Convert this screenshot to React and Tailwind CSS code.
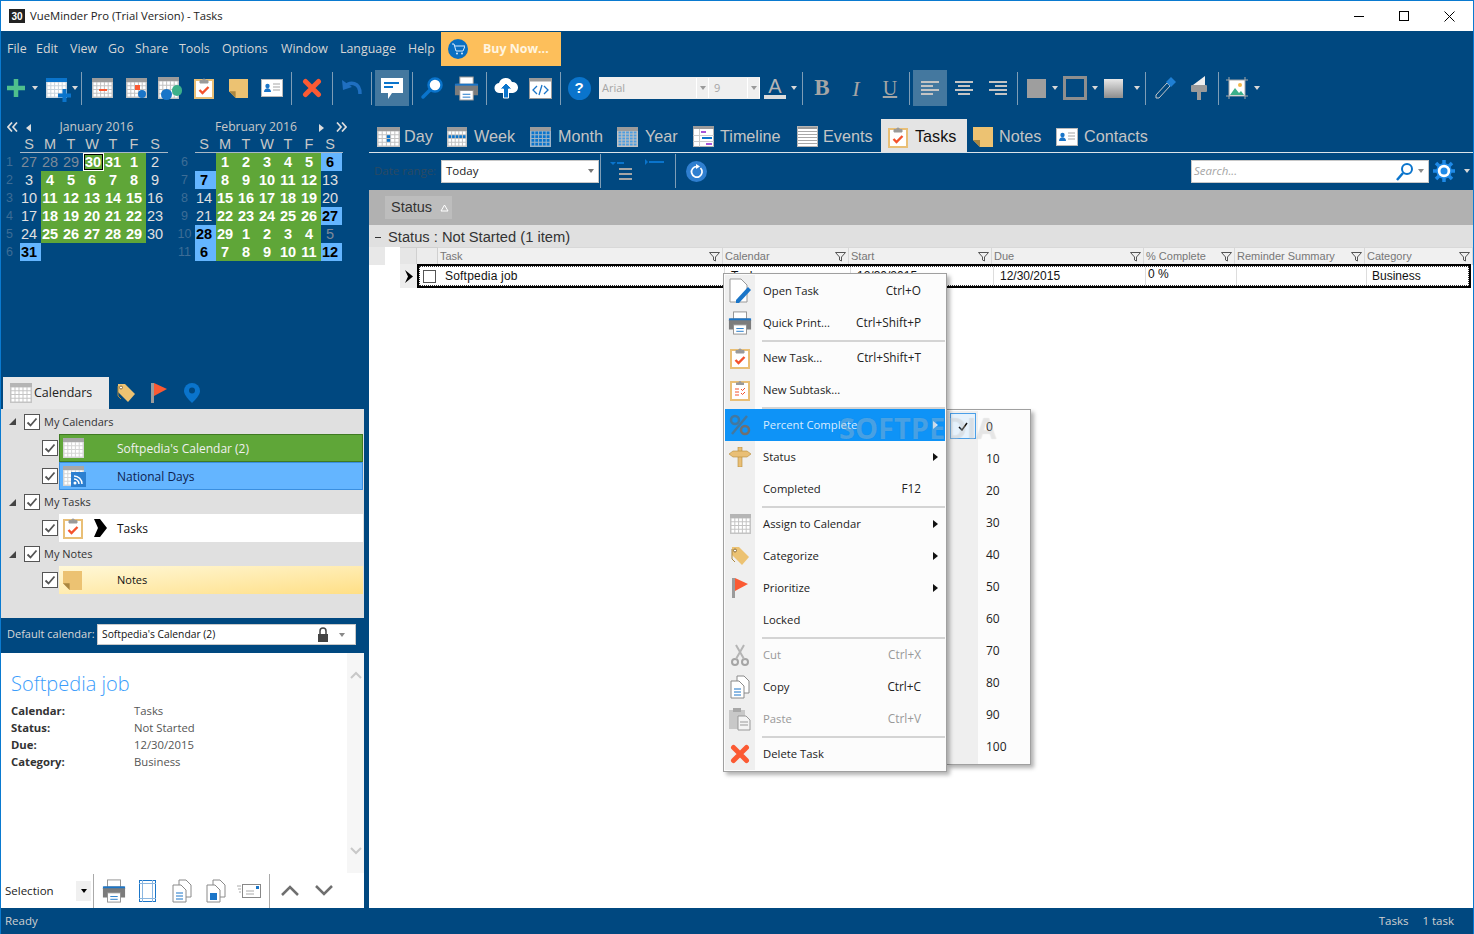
import React from "react";

const Grid = ({ w = 22, h = 20, cols = 5, rows = 4, head = "#9b9b9b", blue = () => false, frame = "#c2c2c2", cellBlue = "#0a74cc" }) => {
  const cw = (w - 2) / cols, ch = (h - 5) / rows, cells = [];
  for (let r = 0; r < rows; r++) for (let c = 0; c < cols; c++)
    cells.push(<rect key={r + "-" + c} x={1.5 + c * cw} y={4.5 + r * ch} width={cw - 1} height={ch - 1} fill={blue(r, c) ? cellBlue : "#fff"} />);
  return (
    <svg width={w} height={h} viewBox={`0 0 ${w} ${h}`} className="shrink-0">
      <rect width={w} height={h} fill={frame} />
      <rect width={w} height="4" fill={head} />
      {cells}
    </svg>
  );
};

const Clip = ({ s = 22 }) => (
  <svg width={s} height={s * 1.1} viewBox="0 0 20 22" className="shrink-0">
    <rect x="1" y="3" width="18" height="18" fill="#fff" stroke="#e9bf76" strokeWidth="2" />
    <path d="M6 6V3.500h2.500a1.500 1.500 0 0 1 3 0H14V6z" fill="#9a9a9a" stroke="#9a9a9a" />
    <path d="M5.500 13l3 3 6-6" fill="none" stroke="#f4522d" strokeWidth="2.400" />
  </svg>
);
const Note = ({ s = 20 }) => (
  <svg width={s} height={s} viewBox="0 0 20 20" className="shrink-0">
    <path d="M0 0h20v20H7L0 13z" fill="#ecc272" />
    <path d="M0 13h7v7z" fill="#a98640" />
  </svg>
);
const Contact = ({ w = 22, h = 18 }) => (
  <svg width={w} height={h} viewBox="0 0 22 18" className="shrink-0">
    <rect x=".5" y=".5" width="21" height="17" fill="#fff" stroke="#b9b9b9" />
    <circle cx="6.500" cy="7" r="2.200" fill="#1a75c8" />
    <path d="M3 13c0-5 7-5 7 0z" fill="#1a75c8" />
    <path d="M12 5h7M12 8h7M12 11h7" stroke="#a5a5a5" />
  </svg>
);
const RedX = ({ s = 20 }) => (
  <svg width={s} height={s} viewBox="0 0 20 20" className="shrink-0">
    <path d="M3.500 3.500l13 13M16.500 3.500l-13 13" stroke="#fb5a33" strokeWidth="5" strokeLinecap="round" />
  </svg>
);
const Printer = ({ s = 26 }) => (
  <svg width={s} height={s} viewBox="0 0 26 26" className="shrink-0">
    <rect x="6" y="1" width="14" height="8" fill="#fff" stroke="#8e8e8e" />
    <path d="M1 10a2 2 0 0 1 2-2h20a2 2 0 0 1 2 2v10H1z" fill="#7c7c7c" />
    <rect x="1" y="8" width="24" height="2" fill="#1a75c8" />
    <rect x="6" y="15" width="14" height="10" fill="#fff" stroke="#8e8e8e" />
    <path d="M9 19h8M9 22h8" stroke="#1a75c8" />
  </svg>
);
const Magnifier = () => (
  <svg width="24" height="24" viewBox="0 0 24 24" className="shrink-0">
    <circle cx="15" cy="9" r="6.500" fill="#fff" stroke="#0a74cc" strokeWidth="2.500" />
    <path d="M10 14L3 21" stroke="#0a74cc" strokeWidth="3.500" strokeLinecap="round" />
  </svg>
);
const Arrow = ({ c = "#d8d8d8" }) => (
  <svg width="6" height="4" viewBox="0 0 6 4" className="shrink-0"><path d="M0 0h6L3 4z" fill={c} /></svg>
);
const Funnel = () => (
  <svg width="11" height="10" viewBox="0 0 11 10" className="shrink-0">
    <path d="M.5.500h10L6.500 5v4l-2-1V5z" fill="none" stroke="#555" />
  </svg>
);
const Check = () => (
  <svg width="16" height="16" viewBox="0 0 16 16" className="shrink-0">
    <rect x=".5" y=".5" width="15" height="15" fill="#fff" stroke="#555" />
    <path d="M3.500 8.500l3 3 6-7" fill="none" stroke="#555" strokeWidth="1.800" />
  </svg>
);
const Tri = () => (
  <svg width="7" height="7" viewBox="0 0 7 7" className="shrink-0"><path d="M7 0v7H0z" fill="#444" /></svg>
);
const Tag = ({ s = 20 }) => (
  <svg width={s} height={s} viewBox="0 0 20 20" className="shrink-0">
    <path d="M2 1h7l10 10-7 8L2 9z" fill="#ecc272" />
    <circle cx="5" cy="4.500" r="1.500" fill="#fff" stroke="#8a6d3b" />
    <path d="M2 3v10l3 3" fill="none" stroke="#a98640" />
  </svg>
);
const Flag = ({ s = 20 }) => (
  <svg width={s} height={s} viewBox="0 0 20 20" className="shrink-0">
    <rect x="2" y="0" width="3" height="20" fill="#9b9b9b" />
    <path d="M5 0l13 6-13 7z" fill="#fb5a33" />
  </svg>
);
const Pin = () => (
  <svg width="16" height="20" viewBox="0 0 16 20" className="shrink-0">
    <path d="M8 0a8 8 0 0 1 8 8c0 4-5 9-8 12C5 17 0 12 0 8a8 8 0 0 1 8-8z" fill="#0a74cc" />
    <circle cx="8" cy="7.500" r="3" fill="#004880" />
  </svg>
);
const DocIcon = ({ letter }) => (
  <svg width="22" height="24" viewBox="0 0 22 24" className="shrink-0">
    <path d="M8 1h7l5 5v12H8z" fill="#fff" stroke="#8a8a8a" />
    <path d="M2 6h8l5 5v12H2z" fill="#fff" stroke="#8a8a8a" />
    {letter ? <rect x="5" y="14" width="7" height="7" fill="#1a75c8" /> : <path d="M5 14h7M5 17h7M5 20h7" stroke="#1a75c8" />}
  </svg>
);
const Slot = ({ w = "w-[34px]", children, className = "" }) => (
  <div className={`${w} h-[34px] flex items-center justify-center shrink-0 ${className}`}>{children}</div>
);
const Sep = ({ c = "" }) => <div className={`w-px h-[33px] bg-[#7e9db6] shrink-0 ${c}`} />;

const MENUBAR = [["File", "w-[29px]"], ["Edit", "w-[34px]"], ["View", "w-[38px]"], ["Go", "w-[27px]"], ["Share", "w-[44px]"], ["Tools", "w-[43px]"], ["Options", "w-[59px]"], ["Window", "w-[59px]"], ["Language", "w-[68px]"], ["Help", "w-[33px]"]];

const Toolbar = () => (
  <div className="h-[44px] flex items-center shrink-0 text-[#c4c4c4]">
    <Slot w="w-[29px]" className="pl-[1px]">
      <svg width="20" height="20" viewBox="0 0 20 20"><path d="M10 1v18M1 10h18" stroke="#4fc08d" strokeWidth="4.500" /></svg>
    </Slot>
    <Slot w="w-[10px]"><Arrow /></Slot>
    <Slot w="w-[32px]">
      <div className="relative">
        <Grid w={21} h={20} head="#0a74cc" frame="#c8d4de" />
        <svg width="13" height="13" viewBox="0 0 13 13" className="absolute -right-[4px] -bottom-[4px]"><path d="M6.500 0v13M0 6.500h13" stroke="#0a74cc" strokeWidth="4" /></svg>
      </div>
    </Slot>
    <Slot w="w-[6px]"><Arrow /></Slot>
    <Sep c="ml-[3px] mr-[3px]" />
    <Slot>
      <div className="relative">
        <Grid w={21} h={20} />
        <div className="absolute left-[7px] top-[11px] w-[8px] h-[2px] bg-[#fb5a33]" />
      </div>
    </Slot>
    <Slot>
      <div className="relative">
        <Grid w={21} h={20} />
        <div className="absolute left-[9px] top-[7px] w-[5px] h-[5px] bg-[#fb5a33]" />
        <div className="absolute left-[12px] top-[12px] w-[8px] h-[8px] rounded-full bg-[#1a75c8]" />
      </div>
    </Slot>
    <Slot>
      <div className="relative -ml-[4px]">
        <Grid w={21} h={22} />
        <div className="absolute left-[3px] top-[12px] w-[11px] h-[11px] rounded-full bg-[#1a75c8]" />
        <div className="absolute left-[14px] top-[8px] w-[10px] h-[11px] rounded-full bg-[#3cb08a]" />
      </div>
    </Slot>
    <Slot><Clip s={20} /></Slot>
    <Slot><Note s={19} /></Slot>
    <Slot><Contact /></Slot>
    <Sep c="ml-[2px] mr-[3px]" />
    <Slot><RedX /></Slot>
    <Sep c="ml-[3px] mr-[2px]" />
    <Slot>
      <svg width="22" height="20" viewBox="0 0 22 20"><path d="M4 9c5-6 15-5 15 7" fill="none" stroke="#1f6fc0" strokeWidth="3.500" /><path d="M1 2l1 10 9-3z" fill="#1f6fc0" /></svg>
    </Slot>
    <Sep c="ml-[2px] mr-[3px]" />
    <Slot className="bg-[#44789f] !h-[36px]">
      <svg width="24" height="24" viewBox="0 0 24 24"><path d="M1 2h22v15H12l-4 6v-6H1z" fill="#fff" /><path d="M4 6h15v2H4zM4 10h9v2H4z" fill="#0a74cc" /></svg>
    </Slot>
    <Sep c="ml-[3px] mr-[2px]" />
    <Slot><Magnifier /></Slot>
    <Slot><Printer s={25} /></Slot>
    <Sep c="ml-[3px] mr-[2px]" />
    <Slot>
      <svg width="24" height="22" viewBox="0 0 24 22"><path d="M6 16a5 5 0 0 1-1-10 7 7 0 0 1 13-1 5.500 5.500 0 0 1 1 11z" fill="#fff" /><path d="M12 6l6 6h-3.500v9h-5v-9H6z" fill="#0a74cc" stroke="#fff" /></svg>
    </Slot>
    <Slot>
      <svg width="23" height="21" viewBox="0 0 23 21"><rect x=".5" y=".5" width="22" height="20" fill="#fff" stroke="#9a9a9a" /><rect x=".5" y=".5" width="22" height="3" fill="#9a9a9a" /><path d="M8 8l-4 4 4 4M15 8l4 4-4 4M13 7l-3 10" fill="none" stroke="#1a75c8" strokeWidth="1.300" /></svg>
    </Slot>
    <Sep c="ml-[3px] mr-[1px]" />
    <Slot>
      <div className="w-[23px] h-[23px] rounded-full bg-[#0a74cc] text-white text-[15px] font-bold flex items-center justify-center font-['Liberation_Sans',sans-serif]">?</div>
    </Slot>
    <div className="ml-[3px] w-[161px] h-[22px] bg-[#efefef] flex items-center text-[11px] text-[#a5a5a5] shrink-0">
      <span className="pl-[3px] w-[97px]">Arial</span>
      <span className="w-[13px] h-[20px] border-x border-white flex items-center justify-center"><Arrow c="#9a9a9a" /></span>
      <span className="pl-[5px] w-[38px]">9</span>
      <span className="w-[13px] h-[20px] border-x border-white flex items-center justify-center"><Arrow c="#9a9a9a" /></span>
    </div>
    <Slot w="w-[30px]">
      <div className="flex flex-col items-center font-['Liberation_Sans',sans-serif] text-[20px] leading-[18px] text-[#b5b5b5]">A<div className="w-[22px] h-[4px] bg-[#dcdcdc]" /></div>
    </Slot>
    <Slot w="w-[8px]"><Arrow /></Slot>
    <Sep c="ml-[4px] mr-[2px]" />
    <Slot><span className="font-['Liberation_Serif',serif] font-bold text-[23px] text-[#a5a5a5]">B</span></Slot>
    <Slot><span className="font-['Liberation_Serif',serif] italic text-[22px] text-[#a5a5a5]">I</span></Slot>
    <Slot><span className="font-['Liberation_Serif',serif] underline text-[20px] text-[#a5a5a5]">U</span></Slot>
    <Sep c="ml-[2px] mr-[3px]" />
    <Slot className="bg-[#44789f] !h-[36px]"><Align a="l" /></Slot>
    <Slot><Align a="c" /></Slot>
    <Slot><Align a="r" /></Slot>
    <Sep c="ml-[2px] mr-[2px]" />
    <Slot w="w-[32px]"><div className="w-[19px] h-[19px] bg-[#9e9e9e]" /></Slot>
    <Slot w="w-[6px]"><Arrow /></Slot>
    <Slot><div className="w-[24px] h-[24px] border-[3px] border-[#8e8e8e]" /></Slot>
    <Slot w="w-[6px]"><Arrow /></Slot>
    <Slot w="w-[30px]"><div className="w-[19px] h-[19px] bg-gradient-to-b from-[#e8e8e8] to-[#8e8e8e]" /></Slot>
    <Slot w="w-[17px]"><Arrow /></Slot>
    <Sep c="mr-[2px]" />
    <Slot>
      <svg width="24" height="24" viewBox="0 0 24 24"><path d="M14 7L3 19v3h3L17 10z" fill="none" stroke="#c8c8c8" /><path d="M13 6l5-5 5 5-5 5z" fill="#1f7fd4" /></svg>
    </Slot>
    <Slot>
      <svg width="20" height="26" viewBox="0 0 20 26"><path d="M4 10l12-9v9z" fill="#eee" /><rect x="2" y="10" width="16" height="7" rx="1" fill="#9a9a9a" /><rect x="8" y="17" width="4" height="8" fill="#9a9a9a" /></svg>
    </Slot>
    <Sep c="ml-[2px] mr-[1px]" />
    <Slot>
      <svg width="22" height="22" viewBox="0 0 22 22"><rect x="3" y="3" width="16" height="16" fill="#fff" /><path d="M0 3h22M0 19h22M3 0v22M19 0v22" stroke="#a8a8a8" /><circle cx="14" cy="8" r="2" fill="#f2b84b" /><path d="M4 18l5-7 4 5 2-2 3 4z" fill="#3cb08a" /></svg>
    </Slot>
    <Slot w="w-[6px]"><Arrow /></Slot>
  </div>
);
const Align = ({ a }) => {
  const x = a === "l" ? 0 : a === "c" ? 3 : 6;
  return (
    <svg width="18" height="15" viewBox="0 0 18 15">
      <rect y="0" width="18" height="2" fill="#c4c4c4" />
      <rect x={x} y="4" width="12" height="2" fill="#c4c4c4" />
      <rect y="8" width="18" height="2" fill="#c4c4c4" />
      <rect x={x} y="12" width="12" height="2" fill="#c4c4c4" />
    </svg>
  );
};

const JAN = [
  [1, ["27d", "28d", "29d", "30s", "31g", "1g", "2"]],
  [2, ["3", "4g", "5g", "6g", "7g", "8g", "9"]],
  [3, ["10", "11g", "12g", "13g", "14g", "15g", "16"]],
  [4, ["17", "18g", "19g", "20g", "21g", "22g", "23"]],
  [5, ["24", "25g", "26g", "27g", "28g", "29g", "30"]],
  [6, ["31b", "", "", "", "", "", ""]],
];
const FEB = [
  [6, ["", "1g", "2g", "3g", "4g", "5g", "6b"]],
  [7, ["7b", "8g", "9g", "10g", "11g", "12g", "13"]],
  [8, ["14", "15g", "16g", "17g", "18g", "19g", "20"]],
  [9, ["21", "22g", "23g", "24g", "25g", "26g", "27b"]],
  [10, ["28b", "29g", "1g", "2g", "3g", "4g", "5d"]],
  [11, ["6b", "7g", "8g", "9g", "10g", "11g", "12b"]],
];
const Cell = ({ v }) => {
  const kind = v.slice(-1);
  const n = v.replace(/[a-z]/g, "");
  const base = "w-[21px] h-[18px] flex items-center justify-center pr-[3px] text-[14.500px] leading-none whitespace-nowrap ";
  if (kind === "g") return <div className={base + "bg-[#5fa638] text-white font-bold"}>{n}</div>;
  if (kind === "b") return <div className={base + "bg-[#64b5ff] text-black font-bold"}>{n}</div>;
  if (kind === "d") return <div className={base + "text-[#7d8a99]"}>{n}</div>;
  if (kind === "s") return (
    <div className="w-[21px] h-[18px] bg-white p-[1px]">
      <div className="w-full h-full border border-black bg-[#5fa638] flex items-center justify-center pr-[1px] text-white font-bold text-[14.500px] leading-none">{n}</div>
    </div>
  );
  return <div className={base + "text-[#e0e0e0]"}>{n}</div>;
};
const Double = ({ flip }) => (
  <svg width="11" height="10" viewBox="0 0 11 10" className={flip ? "rotate-180" : ""}>
    <path d="M5 0.500L1 5l4 4.500M10 0.500L6 5l4 4.500" fill="none" stroke="#ddd" strokeWidth="1.700" />
  </svg>
);
const Month = ({ rows, title, left }) => (
  <div className="w-[167px] shrink-0 font-['Liberation_Sans',sans-serif]">
    <div className={`h-[17px] ml-[19px] flex items-center justify-center text-[12.200px] text-[#c8c8c8] relative font-['Open_Sans',sans-serif] ${left ? "pl-[5px]" : "pr-[26px]"}`}>
      {left ? (
        <>
          <span className="absolute -left-[13px] top-[3px]"><Double /></span>
          <svg width="5" height="8" viewBox="0 0 5 8" className="absolute left-[6px] top-[5px]"><path d="M5 0v8L0 4z" fill="#ddd" /></svg>
        </>
      ) : (
        <>
          <svg width="5" height="8" viewBox="0 0 5 8" className="absolute right-[19px] top-[5px]"><path d="M0 0v8l5-4z" fill="#ddd" /></svg>
          <span className="absolute -right-[4px] top-[3px]"><Double flip /></span>
        </>
      )}
      {title}
    </div>
    <div className="ml-[19px] h-[16px] flex border-b border-[#a8b8c6] box-content">
      {["S", "M", "T", "W", "T", "F", "S"].map((d, i) => (
        <div key={i} className="w-[21px] pr-[3px] text-center text-[14.500px] leading-[17px] text-[#c8c8c8]">{d}</div>
      ))}
    </div>
    {rows.map(([wk, days]) => (
      <div key={wk} className="flex h-[18px]">
        <div className="w-[19px] pr-[2px] text-center text-[12.500px] leading-[18px] text-[#3d6d96]">{wk}</div>
        {days.map((d, i) => <Cell key={i} v={d} />)}
      </div>
    ))}
  </div>
);

const TreeHead = ({ label, c = "h-[24px]" }) => (
  <div className={`${c} flex items-center pl-[8px] shrink-0`}>
    <Tri /><span className="w-[8px]" /><Check /><span className="ml-[4px] pt-[1px] text-[#333] text-[11px]">{label}</span>
  </div>
);
const TreeRow = ({ cls, icon, label, extra, text = "text-[#111]" }) => (
  <div className="flex items-center h-[28px] pl-[41px] shrink-0">
    <Check />
    <div className={`ml-[1px] w-[304px] h-[28px] flex items-center relative ${cls}`}>
      <div className="w-[58px] pl-[4px] flex items-center">{icon}</div>
      {extra}
      <span className={`pt-[1px] ${text}`}>{label}</span>
    </div>
  </div>
);

const Cal = () => <Grid w={21} h={20} frame="#d5d5d5" head="#a8a8a8" />;

const Left = () => (
  <div className="w-[363px] shrink-0 flex flex-col">
    <div className="h-[267px] shrink-0 flex pt-[9px] gap-[8px]">
      <Month rows={JAN} title="January 2016" left />
      <Month rows={FEB} title="February 2016" />
    </div>
    <div className="h-[32px] flex shrink-0 pl-[2px]">
      <div className="w-[106px] bg-[#e8e8e8] flex items-center pl-[7px] gap-[2px] text-[12.500px] text-[#222]">
        <Grid w={22} h={20} frame="#c4c4c4" head="#b5b5b5" /><span>Calendars</span>
      </div>
      <div className="w-[33px] flex items-center justify-center"><Tag /></div>
      <div className="w-[33px] flex items-center justify-center"><Flag /></div>
      <div className="w-[33px] flex items-center justify-center"><Pin /></div>
    </div>
    <div className="h-[209px] bg-[#e0e0e0] shrink-0 flex flex-col text-[12px]">
      <TreeHead label="My Calendars" c="h-[25px]" />
      <TreeRow cls="bg-[#5fa638] shadow-[inset_0_0_0_1px_#3f7a22]" icon={<Cal />} label="Softpedia's Calendar (2)" text="text-[#f0f0f0]" />
      <TreeRow cls="bg-[#64b5ff] shadow-[inset_0_0_0_1px_#3a8fe0]" icon={
        <div className="relative"><Cal />
          <svg width="15" height="15" viewBox="0 0 15 15" className="absolute left-[8px] top-[6px]"><rect width="15" height="15" fill="#2c7fd0" /><circle cx="4" cy="11" r="1.500" fill="#fff" /><path d="M3 7a5 5 0 0 1 5 5M3 4a8 8 0 0 1 8 8" fill="none" stroke="#fff" strokeWidth="1.500" /></svg>
        </div>
      } label="National Days" text="text-[#0d2250]" />
      <TreeHead label="My Tasks" />
      <TreeRow cls="bg-white" icon={<Clip s={20} />} extra={
        <svg width="13" height="18" viewBox="0 0 13 18" className="absolute left-[35px] top-[5px]"><path d="M0 0l6 0 7 9-7 9H0l4-9z" fill="#000" /></svg>
      } label="Tasks" />
      <TreeHead label="My Notes" />
      <TreeRow cls="bg-gradient-to-br from-[#fff8d8] to-[#ffdf85]" icon={<Note s={19} />} label="Notes" text="text-[#111] text-[11px]" />
    </div>
    <div className="h-[35px] pb-[2px] shrink-0 flex items-center pl-[6px] text-[11px] text-[#d8d8d8]">
      <span className="w-[90px] whitespace-nowrap">Default calendar:</span>
      <div className="w-[259px] h-[21px] bg-white border border-[#c8c8c8] flex items-center pl-[4px] text-[#111] text-[10.300px]">
        <span className="flex-1">Softpedia's Calendar (2)</span>
        <svg width="12" height="15" viewBox="0 0 12 15"><path d="M3 7V4a3 3 0 0 1 6 0v3" fill="none" stroke="#444" strokeWidth="1.500" /><rect x="1" y="7" width="10" height="8" fill="#444" /></svg>
        <span className="w-[26px] flex justify-center"><Arrow c="#888" /></span>
      </div>
    </div>
    <div className="h-[220px] bg-white shrink-0 flex">
      <div className="flex-1 pl-[10px] pt-[17px]">
        <div className="text-[20px] leading-[28px] text-[#3b9dfb] font-light">Softpedia job</div>
        <div className="mt-[4px] text-[11.300px] leading-[17px] text-[#555] grid grid-cols-[123px_1fr]">
          <b className="text-[#333]">Calendar:</b><span>Tasks</span>
          <b className="text-[#333]">Status:</b><span>Not Started</span>
          <b className="text-[#333]">Due:</b><span>12/30/2015</span>
          <b className="text-[#333]">Category:</b><span>Business</span>
        </div>
      </div>
      <div className="w-[17px] bg-[#f6f6f6] flex flex-col justify-between items-center py-[18px]">
        <svg width="12" height="8" viewBox="0 0 12 8"><path d="M1 7l5-5 5 5" fill="none" stroke="#c8c8c8" strokeWidth="2" /></svg>
        <svg width="12" height="8" viewBox="0 0 12 8"><path d="M1 1l5 5 5-5" fill="none" stroke="#c8c8c8" strokeWidth="2" /></svg>
      </div>
    </div>
    <div className="h-[35px] bg-white shrink-0 flex items-center text-[11.500px] text-[#222]">
      <span className="w-[75px] pl-[4px]">Selection</span>
      <div className="w-[15px] h-[20px] bg-[#f0f0f0] flex items-center justify-center"><Arrow c="#000" /></div>
      <div className="ml-[2px] w-px h-[34px] bg-[#aaa]" />
      <div className="w-[40px] flex justify-center"><Printer s={24} /></div>
      <div className="w-[27px] flex justify-center">
        <svg width="17" height="22" viewBox="0 0 17 22"><rect x=".5" y=".5" width="16" height="21" fill="none" stroke="#1a75c8" /><path d="M3.500 0v22M13.500 0v22M0 3.500h17M0 18.500h17" stroke="#8ab6e0" /></svg>
      </div>
      <div className="w-[41px] flex justify-center"><DocIcon /></div>
      <div className="w-[27px] flex justify-center"><DocIcon letter /></div>
      <div className="w-[40px] flex justify-center">
        <svg width="24" height="14" viewBox="0 0 24 14"><rect x="5.500" y=".5" width="18" height="13" fill="#fff" stroke="#888" /><rect x="19" y="2" width="3" height="3" fill="#1a75c8" /><path d="M9 7h8M9 10h8M0 2h4M1 5h3M2 8h2" stroke="#aaa" /></svg>
      </div>
      <div className="w-px h-[34px] bg-[#aaa]" />
      <div className="w-[40px] flex justify-center"><svg width="18" height="11" viewBox="0 0 18 11"><path d="M1 10l8-8 8 8" fill="none" stroke="#6f6f6f" strokeWidth="2.500" /></svg></div>
      <div className="w-[27px] flex justify-center"><svg width="18" height="11" viewBox="0 0 18 11"><path d="M1 1l8 8 8-8" fill="none" stroke="#6f6f6f" strokeWidth="2.500" /></svg></div>
    </div>
  </div>
);

const Timeline = () => (
  <svg width="21" height="21" viewBox="0 0 21 21" className="shrink-0">
    <rect x=".5" y=".5" width="20" height="20" fill="#fff" stroke="#b5b5b5" />
    <rect width="21" height="3" fill="#9b9b9b" />
    <path d="M6.500 3v18M0 9.500h21M0 15.500h21" stroke="#ccc" />
    <rect x="8" y="5" width="5" height="2" fill="#a855d8" />
    <rect x="9" y="11" width="10" height="2" fill="#0a74cc" />
    <rect x="13" y="17" width="6" height="2" fill="#a855d8" />
  </svg>
);
const Events = () => (
  <svg width="21" height="21" viewBox="0 0 21 21" className="shrink-0">
    <rect width="21" height="21" fill="#fff" />
    <rect width="21" height="3" fill="#9b9b9b" />
    <path d="M0 5.500h21M0 8.500h21M0 11.500h21M0 14.500h21M0 17.500h21" stroke="#a8a8a8" />
    <rect x=".5" y=".5" width="20" height="20" fill="none" stroke="#b5b5b5" />
  </svg>
);
const TABS = [
  ["Day", <Grid w={23} h={20} cols={5} rows={4} blue={(r, c) => (r === 1 || r === 2) && c === 2} />, "w-[70px]", "gap-[4px]"],
  ["Week", <Grid w={20} h={20} cols={5} rows={4} blue={(r) => r === 1} />, "w-[83px]", "gap-[7px]"],
  ["Month", <Grid w={21} h={20} cols={5} rows={4} blue={() => true} frame="#9cb4c8" />, "w-[87px]", "gap-[7px]"],
  ["Year", <Grid w={21} h={20} cols={5} rows={5} blue={() => true} cellBlue="#4d9de0" />, "w-[76px]", "gap-[7px]"],
  ["Timeline", <Timeline />, "w-[104px]", "gap-[6px]"],
  ["Events", <Events />, "w-[84px]", "gap-[5px]"],
];

const Right = () => (
  <div className="flex-1 flex flex-col min-w-0">
    <div className="h-[42px] shrink-0 flex items-end pl-[8px] font-['Liberation_Sans',sans-serif] text-[16.200px] text-[#c4c4c4]">
      {TABS.map(([t, ic, w, g]) => (
        <div key={t} className={`${w} h-[33px] pt-[2px] flex items-center ${g} shrink-0`}>{ic}<span>{t}</span></div>
      ))}
      <div className="w-[86px] h-[33px] pt-[2px] bg-[#e4e4e4] flex items-center pl-[7px] gap-[7px] text-[#111] shrink-0"><Clip s={20} /><span>Tasks</span></div>
      <div className="w-[89px] h-[33px] pt-[2px] flex items-center pl-[6px] gap-[6px] shrink-0"><Note s={20} /><span>Notes</span></div>
      <div className="h-[33px] pt-[2px] flex items-center gap-[6px] shrink-0"><Contact /><span>Contacts</span></div>
    </div>
    <div className="h-px bg-[#dce4ea] shrink-0" />
    <div className="h-[36px] shrink-0 flex items-center text-[11.500px]">
      <span className="w-[72px] pl-[5px] text-[#2b4a63] whitespace-nowrap">Date range:</span>
      <div className="w-[158px] h-[23px] bg-white border border-[#c8c8c8] flex items-center pl-[4px] text-[#222] justify-between pr-[4px]">
        Today<Arrow c="#777" />
      </div>
      <div className="w-px h-[34px] ml-[1px] bg-[#7e9db6]" />
      <svg width="74" height="24" viewBox="0 0 74 24" className="shrink-0">
        <path d="M9 3h6l-3 3z" fill="#0a74cc" /><path d="M16 4h7" stroke="#0a74cc" strokeWidth="2" />
        <path d="M18 10h13M18 15h13M18 20h13" stroke="#a5a5a5" strokeWidth="2" />
        <path d="M44 0v6l3-3z" fill="#0a74cc" /><path d="M48 3h15" stroke="#0a74cc" strokeWidth="2" />
      </svg>
      <div className="w-px h-[34px] bg-[#7e9db6]" />
      <div className="ml-[10px] w-[21px] h-[21px] rounded-full bg-[#2f7fd0] flex items-center justify-center">
        <svg width="15" height="15" viewBox="0 0 15 15"><path d="M11.500 4a5.300 5.300 0 1 1-3.500-1.500" fill="none" stroke="#fff" strokeWidth="1.700" /><path d="M7 0v5l4-2.500z" fill="#fff" /></svg>
      </div>
      <div className="ml-[484px] w-[238px] h-[23px] bg-white border border-[#c8c8c8] flex items-center pl-[2px] text-[#a5a5a5] italic shrink-0">
        <span className="flex-1">Search...</span>
        <svg width="19" height="19" viewBox="0 0 19 19"><circle cx="12" cy="7" r="5" fill="none" stroke="#0a74cc" strokeWidth="2" /><path d="M8 11l-6 7" stroke="#0a74cc" strokeWidth="2.500" /></svg>
        <span className="w-[14px] flex justify-center"><Arrow c="#8a8a8a" /></span>
      </div>
      <div className="w-[30px] flex justify-center shrink-0">
        <svg width="22" height="22" viewBox="0 0 22 22"><path d="M11 0v22M0 11h22M3 3l16 16M19 3L3 19" stroke="#1f8ae8" strokeWidth="3.500" /><circle cx="11" cy="11" r="7" fill="#fff" stroke="#1f8ae8" strokeWidth="1.500" /><circle cx="11" cy="11" r="3.500" fill="#1f8ae8" /></svg>
      </div>
      <span className="ml-[5px]"><Arrow /></span>
    </div>
    <div className="flex-1 bg-white flex flex-col min-h-0 font-['Liberation_Sans',sans-serif] text-[#333] mt-[1px]">
      <div className="h-[35px] bg-[#b1b1b1] flex items-center pl-[16px] shrink-0">
        <div className="w-[67px] h-[23px] bg-[#bdbdbd] flex items-center pl-[6px] gap-[8px] text-[14.500px]">
          Status
          <svg width="9" height="8" viewBox="0 0 9 8"><path d="M4.500 1L8 7H1z" fill="none" stroke="#fff" /></svg>
        </div>
      </div>
      <div className="h-[22px] pt-[2px] bg-[#e0e0e0] flex items-center pl-[6px] gap-[7px] text-[14.700px] shrink-0">
        <span className="w-[6px] h-px bg-[#333]" />Status : Not Started (1 item)
      </div>
      <div className="h-[18px] flex shrink-0 text-[11px] text-[#777]">
        <div className="w-[16px] bg-[#e8e8e8]" />
        <div className="w-[15px] bg-white" />
        <div className="w-[17px] bg-[#e6e6e6] border-r border-t border-[#d0d0d0]" />
        <div className="w-[21px] bg-[#ececec] border-r border-t border-[#d0d0d0]" />
        {[["Task", "w-[285px]"], ["Calendar", "w-[126px]"], ["Start", "w-[143px]"], ["Due", "w-[152px]"], ["% Complete", "w-[91px]"], ["Reminder Summary", "w-[130px]"], ["Category", "flex-1"]].map(([t, w]) => (
          <div key={t} className={`${w} bg-[#f0f0f0] border-t border-r border-[#d8d8d8] flex items-center justify-between pl-[2px] pr-[2px]`}><span className="whitespace-nowrap">{t}</span><Funnel /></div>
        ))}
      </div>
      <div className="h-[24px] -mt-px flex shrink-0 text-[12px] text-[#111] relative">
        <div className="w-[31px]" />
        <div className="w-[17px] bg-[#ededed] flex items-center justify-center">
          <svg width="8" height="13" viewBox="0 0 8 13"><path d="M0 0l8 6.500L0 13l3-6.500z" fill="#000" /></svg>
        </div>
        <div className="w-[1054px] border-2 border-black bg-white">
          <div className="h-full border border-dotted border-[#333] flex items-center">
            <div className="w-[19px] flex justify-center"><div className="w-[13px] h-[13px] border border-[#555]" /></div>
            <div className="w-[285px] pl-[6px] h-full flex items-center tracking-[0.2px]">Softpedia job</div>
            <div className="w-[126px] pl-[6px] h-full flex items-center border-l border-[#ddd]">Tasks</div>
            <div className="w-[143px] pl-[6px] h-full flex items-center border-l border-[#ddd]">12/30/2015</div>
            <div className="w-[152px] pl-[6px] h-full flex items-center border-l border-[#ddd]">12/30/2015</div>
            <div className="w-[91px] pl-[2px] h-full flex items-start border-l border-[#ddd] leading-[14px]">0 %</div>
            <div className="w-[130px] h-full border-l border-[#ddd]" />
            <div className="pl-[5px] h-full flex items-center border-l border-[#ddd]">Business</div>
          </div>
        </div>
      </div>
    </div>
  </div>
);

const Pct = () => (
  <svg width="22" height="22" viewBox="0 0 22 22"><circle cx="6" cy="6" r="4" fill="none" stroke="#44789f" strokeWidth="2.500" /><circle cx="16" cy="16" r="4" fill="none" stroke="#707070" strokeWidth="2.500" /><path d="M18 2L3 20" stroke="#44789f" strokeWidth="2.500" /></svg>
);
const Sign = () => (
  <svg width="22" height="20" viewBox="0 0 22 20"><rect x="9" y="0" width="4" height="20" fill="#e9bf76" stroke="#b58b3a" strokeWidth=".6" /><path d="M4 4h14l4 3-4 3H4L0 7z" fill="#e9bf76" stroke="#b58b3a" strokeWidth=".6" /></svg>
);

const MenuItem = ({ icon, label, sc, sub, dis, active }) => (
  <div className={`h-[32px] flex items-center relative ${active ? "bg-[#0e93f7]" : ""}`}>
    <div className={`w-[30px] h-full flex items-center justify-center shrink-0 ${active ? "" : "bg-[#efefef]"}`}>{icon}</div>
    <span className={`ml-[8px] ${active ? "text-[#d8ecff]" : dis ? "text-[#999]" : "text-[#222]"}`}>{label}</span>
    {sc && <span className={`absolute right-[24px] text-[11.800px] ${dis ? "text-[#999]" : "text-[#222]"}`}>{sc}</span>}
    {sub && <svg width="5" height="8" viewBox="0 0 5 8" className="absolute right-[7px] top-[12px]"><path d="M0 0l5 4-5 4z" fill={active ? "#d8ecff" : "#111"} /></svg>}
  </div>
);
const MSep = () => (
  <div className="h-[3px] flex"><div className="w-[30px] bg-[#efefef]" /><div className="flex-1 pl-[7px]"><div className="h-[2px] mt-px bg-[#d4d4d4]" /></div></div>
);

const ContextMenu = () => (
  <>
    <div className="absolute left-[945px] top-[408px] w-[85px] h-[356px] bg-[#fcfcfc] border border-[#a0a0a0] shadow-[3px_3px_4px_rgba(0,0,0,0.3)] flex text-[12px] text-[#222] pt-px">
      <div className="w-[31px] bg-[#efefef] relative">
        <div className="absolute left-[3px] top-[2px] w-[26px] h-[26px] bg-[#e6f2fc] border border-[#4a9fe8] flex items-center justify-center">
          <svg width="10" height="9" viewBox="0 0 10 9"><path d="M1 5l3 3 5-7" fill="none" stroke="#111" strokeWidth="1.500" /></svg>
        </div>
      </div>
      <div className="pl-[8px]">
        {[0, 10, 20, 30, 40, 50, 60, 70, 80, 90, 100].map((n) => (
          <div key={n} className="h-[32px] flex items-center">{n}</div>
        ))}
      </div>
    </div>
    <div className="absolute left-[722px] top-[272px] w-[224px] bg-[#fcfcfc] border border-[#a0a0a0] shadow-[3px_3px_4px_rgba(0,0,0,0.3)] p-px text-[11.300px]">
      <MenuItem label="Open Task" sc="Ctrl+O" icon={
        <svg width="24" height="26" viewBox="0 0 24 26"><path d="M2 1h11l6 6v17H2z" fill="#fff" stroke="#999" /><path d="M8 22l12-13 3 3-12 13H8z" fill="#1a75c8" /></svg>
      } />
      <MenuItem label="Quick Print..." sc="Ctrl+Shift+P" icon={<Printer s={24} />} />
      <MSep />
      <MenuItem label="New Task..." sc="Ctrl+Shift+T" icon={<Clip s={20} />} />
      <MenuItem label="New Subtask..." icon={
        <svg width="20" height="24" viewBox="0 0 20 22"><rect x="1" y="3" width="18" height="18" fill="#fff" stroke="#e9bf76" strokeWidth="2" /><path d="M6 6V3.500h2.500a1.500 1.500 0 0 1 3 0H14V6z" fill="#9a9a9a" /><path d="M5 10h4M5 13h4M5 16h4M11 10l1.500 1.500L15 9M11 14l1.500 1.500L15 13" fill="none" stroke="#f4522d" /></svg>
      } />
      <MSep />
      <MenuItem active label="Percent Complete" sub icon={<Pct />} />
      <MenuItem label="Status" sub icon={<Sign />} />
      <MenuItem label="Completed" sc="F12" />
      <MSep />
      <MenuItem label="Assign to Calendar" sub icon={<Grid w={21} h={20} frame="#c4c4c4" head="#b5b5b5" />} />
      <MenuItem label="Categorize" sub icon={<Tag />} />
      <MenuItem label="Prioritize" sub icon={<Flag />} />
      <MenuItem label="Locked" />
      <MSep />
      <MenuItem dis label="Cut" sc="Ctrl+X" icon={
        <svg width="18" height="22" viewBox="0 0 18 22"><circle cx="4" cy="18" r="3" fill="none" stroke="#a5a5a5" strokeWidth="2" /><circle cx="14" cy="18" r="3" fill="none" stroke="#a5a5a5" strokeWidth="2" /><path d="M5 15L13 1M13 15L5 1" stroke="#b5b5b5" strokeWidth="2" /></svg>
      } />
      <MenuItem label="Copy" sc="Ctrl+C" icon={<DocIcon />} />
      <MenuItem dis label="Paste" sc="Ctrl+V" icon={
        <svg width="24" height="24" viewBox="0 0 24 24"><rect x="1" y="3" width="16" height="19" fill="#c8c8c8" /><rect x="5" y="1" width="8" height="4" fill="#a8a8a8" /><path d="M10 9h8l4 4v10H10z" fill="#f4f4f4" stroke="#999" /><path d="M12 15h8M12 18h8" stroke="#999" /></svg>
      } />
      <MSep />
      <MenuItem label="Delete Task" icon={<RedX s={20} />} />
    </div>
    <div className="absolute left-[838px] top-[408px] text-[29px] leading-[38px] font-bold text-white/25 [text-shadow:0_0_1px_rgba(0,0,0,0.12)] font-['Open_Sans',sans-serif] pointer-events-none">SOFTPEDIA</div>
  </>
);

export default function App() {
  return (
    <div className="relative w-[1474px] h-[934px] overflow-hidden flex flex-col bg-[#004880] border border-[#0a7ad0] border-b-0 font-['Open_Sans',sans-serif] text-[12px]">
      <div className="h-[30px] bg-white flex items-center shrink-0 text-[#222]">
        <div className="ml-[8px] w-[16px] h-[14px] bg-[#222] text-white text-[10px] leading-[15px] text-center font-bold font-['Liberation_Sans',sans-serif]">30</div>
        <span className="ml-[5px] text-[11.300px]">VueMinder Pro (Trial Version) - Tasks</span>
        <div className="ml-auto flex items-center">
          <div className="w-[45px] flex justify-center"><div className="w-[10px] h-px bg-black" /></div>
          <div className="w-[45px] flex justify-center"><div className="w-[10px] h-[10px] border border-black" /></div>
          <div className="w-[46px] flex justify-center">
            <svg width="11" height="11" viewBox="0 0 11 11"><path d="M.5.500l10 10M10.500.500l-10 10" stroke="#000" /></svg>
          </div>
        </div>
        <div className="w-[1px]" />
      </div>
      <div className="h-[35px] flex items-stretch shrink-0 pl-[6px] text-[#d6d6d6] pt-[1px] text-[12.400px]">
        {MENUBAR.map(([m, w]) => (
          <div key={m} className={`${w} flex items-center`}>{m}</div>
        ))}
        <div className="w-[120px] bg-[#fdbf5b] flex items-center pl-[7px] gap-[15px]">
          <div className="w-[20px] h-[20px] rounded-full bg-[#0a6fc2] flex items-center justify-center">
            <svg width="13" height="12" viewBox="0 0 13 12"><path d="M0 1h2l2 7h7l2-5H3" fill="none" stroke="#d8ecff" /><circle cx="5" cy="10.500" r="1" fill="#d8ecff" /><circle cx="10" cy="10.500" r="1" fill="#d8ecff" /></svg>
          </div>
          <span className="font-bold text-[#fff5e0]">Buy Now...</span>
        </div>
      </div>
      <Toolbar />
      <div className="flex-1 flex min-h-0">
        <Left />
        <div className="w-[5px] shrink-0" />
        <Right />
      </div>
      <div className="h-[26px] shrink-0 flex items-center pl-[4px] pr-[19px] text-[#d0d0d0] text-[11.500px]">
        <span>Ready</span>
        <span className="ml-auto">Tasks</span>
        <span className="ml-[14px]">1 task</span>
      </div>
      <ContextMenu />
    </div>
  );
}
